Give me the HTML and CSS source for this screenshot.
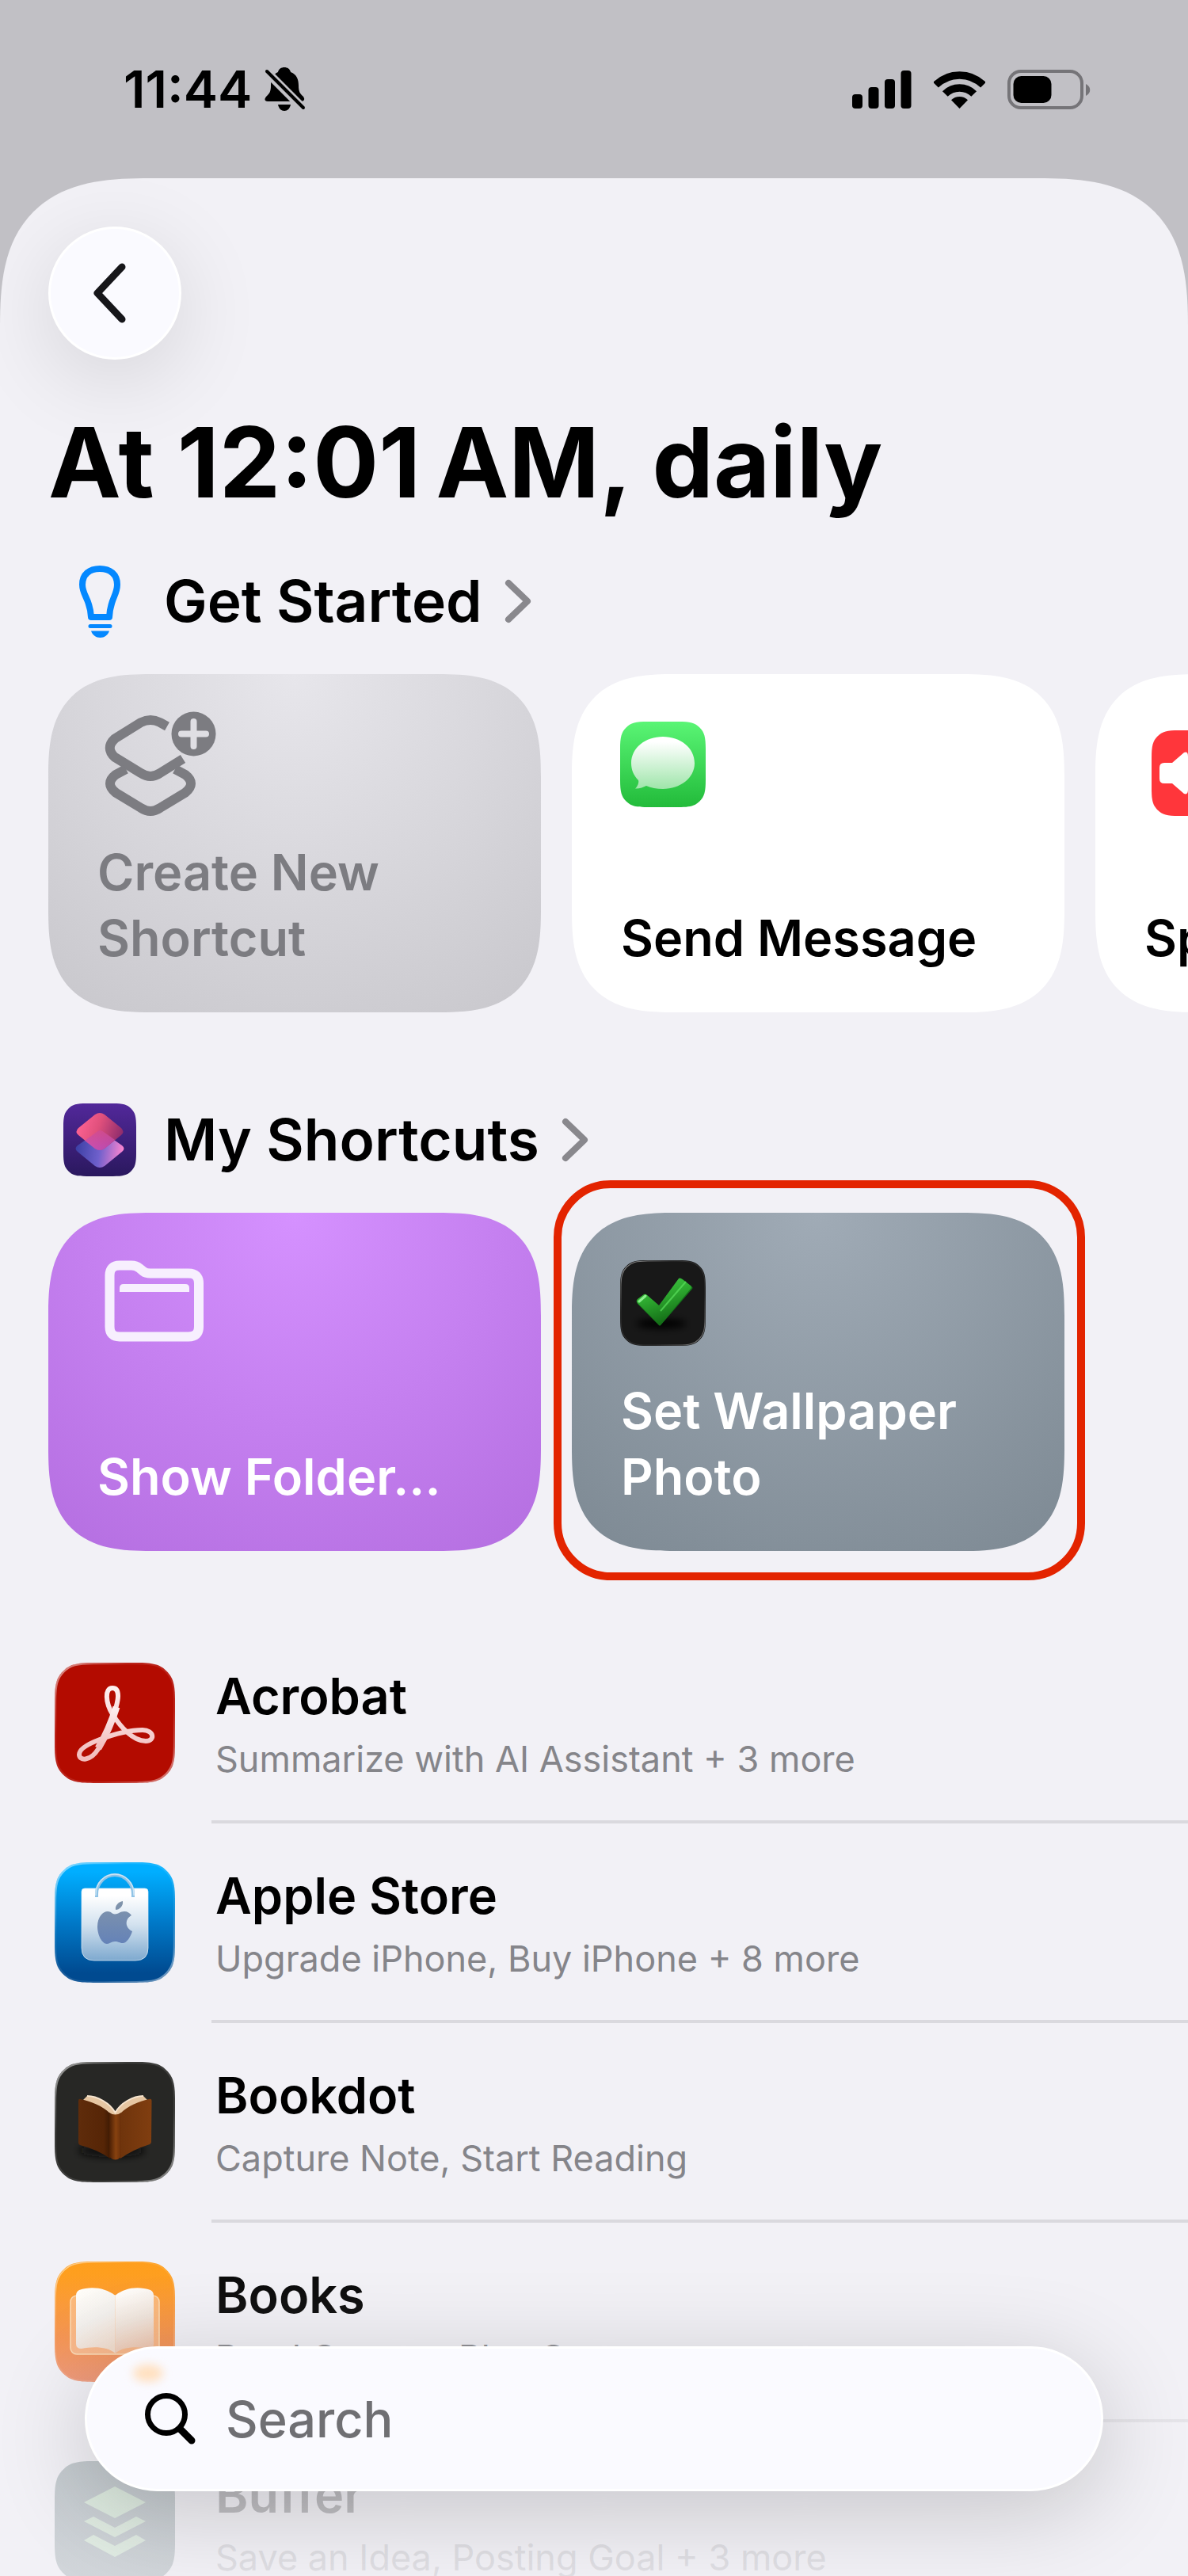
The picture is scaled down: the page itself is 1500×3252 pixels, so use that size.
FILE: index.html
```html
<!DOCTYPE html>
<html lang="en">
<head>
<meta charset="utf-8">
<meta name="viewport" content="width=device-width, initial-scale=1">
<title>At 12:01 AM, daily</title>
<link rel="stylesheet" href="styles.css">
</head>
<body>
<svg class="defs" aria-hidden="true">
  <defs>
    <path id="tile" d="M32 0H68C82 0 87.5 1.500 93 7C98.500 12.500 100 18 100 32V68C100 82 98.500 87.500 93 93C87.500 98.500 82 100 68 100H32C18 100 12.500 98.500 7 93C1.500 87.500 0 82 0 68V32C0 18 1.500 12.500 7 7C12.500 1.500 18 0 32 0Z"/>
    <linearGradient id="rim" x1="0" y1="0" x2="1" y2="1"><stop offset="0" stop-color="#fff" stop-opacity=".6"/><stop offset=".3" stop-color="#fff" stop-opacity=".1"/><stop offset=".7" stop-color="#fff" stop-opacity=".1"/><stop offset="1" stop-color="#fff" stop-opacity=".5"/></linearGradient>
    <linearGradient id="green" x1="0" y1="0" x2="0" y2="1"><stop offset="0" stop-color="#5af575"/><stop offset="1" stop-color="#22bb3a"/></linearGradient>
    <linearGradient id="bubble" x1="0" y1="0" x2="0" y2="1"><stop offset="0.100" stop-color="#fff"/><stop offset="1" stop-color="#9fe5aa"/></linearGradient>
    <linearGradient id="violet" x1="0" y1="0" x2="0" y2="1"><stop offset="0" stop-color="#52289a"/><stop offset="1" stop-color="#2a185e"/></linearGradient>
    <linearGradient id="pink" x1="0" y1=".3" x2="1" y2=".6"><stop offset="0" stop-color="#ff6494"/><stop offset=".45" stop-color="#e0507c"/><stop offset="1" stop-color="#8a2a6c"/></linearGradient>
    <linearGradient id="indigo" x1="0" y1=".4" x2="1" y2=".5"><stop offset="0" stop-color="#3b3fa4"/><stop offset=".5" stop-color="#6f60cc"/><stop offset="1" stop-color="#ff86d0"/></linearGradient>
    <linearGradient id="overlap" x1="0" y1="0" x2="0" y2="1"><stop offset="0" stop-color="#d04c92"/><stop offset="1" stop-color="#c04fc0"/></linearGradient>
    <linearGradient id="check" x1="0" y1="0" x2=".4" y2="1"><stop offset="0" stop-color="#47d14b"/><stop offset=".5" stop-color="#2da82f"/><stop offset="1" stop-color="#136c16"/></linearGradient>
    <linearGradient id="ribbon" x1="0" y1="0" x2="0" y2="1"><stop offset="0" stop-color="#fdf0f0"/><stop offset="1" stop-color="#f2bcbc"/></linearGradient>
    <linearGradient id="sky" x1="0" y1="0" x2="0" y2="1"><stop offset=".08" stop-color="#00aeff"/><stop offset=".5" stop-color="#0079c8"/><stop offset=".92" stop-color="#004a90"/></linearGradient>
    <linearGradient id="bag" x1="0" y1="0" x2="0" y2="1"><stop offset=".1" stop-color="#fff"/><stop offset=".5" stop-color="#d3e2ef"/><stop offset="1" stop-color="#7ea9cf"/></linearGradient>
    <linearGradient id="fruit" x1="0" y1="0" x2="0" y2="1"><stop offset="0" stop-color="#8295aa"/><stop offset="1" stop-color="#6482b8"/></linearGradient>
    <linearGradient id="coverL" x1="0" y1="0" x2="1" y2="0"><stop offset="0" stop-color="#5f2c0b"/><stop offset=".8" stop-color="#562506"/><stop offset="1" stop-color="#3e1a03"/></linearGradient>
    <linearGradient id="coverR" x1="0" y1="0" x2="1" y2="0"><stop offset="0" stop-color="#6f340c"/><stop offset="1" stop-color="#803e10"/></linearGradient>
    <linearGradient id="spine" x1="0" y1="0" x2="1" y2="0"><stop offset="0" stop-color="#4a1f04"/><stop offset=".55" stop-color="#874210"/><stop offset="1" stop-color="#6a300a"/></linearGradient>
    <linearGradient id="orange" x1="0" y1="0" x2="0" y2="1"><stop offset=".1" stop-color="#ff9b14"/><stop offset=".6" stop-color="#f58c40"/><stop offset="1" stop-color="#ee8660"/></linearGradient>
    <linearGradient id="pageL" x1=".3" y1="0" x2=".6" y2="1"><stop offset="0" stop-color="#fffdf8"/><stop offset=".5" stop-color="#f1eeea"/><stop offset="1" stop-color="#f0d9c8"/></linearGradient>
    <linearGradient id="pageR" x1="0.400" y1="0" x2=".6" y2="1"><stop offset="0" stop-color="#fffdfa"/><stop offset=".5" stop-color="#eee2d8"/><stop offset="1" stop-color="#eebfa4"/></linearGradient>
    <filter id="soft" x="-50%" y="-100%" width="200%" height="300%"><feGaussianBlur stdDeviation="5"/></filter>
  </defs>
</svg>

<div class="screen">
  <header class="status">
    <div class="status-side">
      <time class="clock">11:44</time>
      <svg width="52" height="56" viewBox="0 0 52 56" role="img" aria-label="Silent">
        <path d="M25 0C29 0 32 2 33 6C41 9 43 16 43 23C43 31 45 33 48 36C52 40 50 43 46 43H4C0 43-1 40 3 36C6 33 8 31 8 23C8 16 10 9 17 6C18 2 21 0 25 0Z"/>
        <path d="M17 47H33C32 52 29 55 25 55C21 55 18 52 17 47Z"/>
        <path class="slash-gap" d="M1 4L49 52"/><path class="slash" d="M3 5L49 51"/>
      </svg>
    </div>
    <div class="status-side status-right">
      <svg width="75" height="48" viewBox="0 0 75 48" role="img" aria-label="Signal">
        <rect y="30" width="13" height="18" rx="4"/><rect x="20.500" y="21" width="13" height="27" rx="4"/><rect x="41" y="11" width="13" height="37" rx="4"/><rect x="61.500" y="0" width="13" height="48" rx="4"/>
      </svg>
      <svg width="65" height="48" viewBox="0 0 65 48" role="img" aria-label="Wi-Fi">
        <g fill="none" stroke="#000" stroke-width="9.500"><path d="M2.500 18.200A42.700 42.700 0 0 1 62.500 18.200"/><path d="M14.300 29.500A25.800 25.800 0 0 1 50.700 29.500"/></g>
        <path d="M22 37.200A15 15 0 0 1 43 37.200L32.500 48Z"/>
      </svg>
      <svg width="106" height="50" viewBox="0 0 106 50" role="img" aria-label="Battery">
        <rect x="2" y="2" width="92" height="46" rx="15" fill="none" stroke="#757478" stroke-width="4"/>
        <rect x="7.500" y="8" width="48" height="34" rx="10"/>
        <path d="M99 18C106 21 106 30 99 33Z" fill="#757478"/>
      </svg>
    </div>
  </header>

  <main class="sheet">
    <button class="back" type="button" aria-label="Back">
      <svg width="48" height="76" viewBox="0 0 48 76"><path d="M39 5L8 38L39 71"/></svg>
    </button>
    <h1 class="title">At 12:01&#8239;AM, daily</h1>

    <section>
      <h2 class="heading"><a href="#get-started">
        <svg width="92" height="92" viewBox="0 0 92 92" fill="none" stroke="#0488ff" stroke-linecap="round" stroke-linejoin="round">
          <path stroke-width="8" d="M35 66C34 43 24 39 24 25C24 12 33 5 46 5C59 5 68 12 68 25C68 39 59 43 58 66Z"/><path stroke-width="5" d="M34 77.500H59"/><path fill="#0488ff" stroke="none" d="M35 83.500H58C56 89 52 92 46.500 92C41 92 37 89 35 83.500Z"/>
        </svg>
        <span>Get Started</span>
        <svg class="chevron" width="34" height="56" viewBox="0 0 34 56"><path d="M5 5L29 28L5 51"/></svg>
      </a></h2>
      <div class="cards" id="get-started">
        <button class="card card-new" type="button">
          <svg width="160" height="140" viewBox="0 0 160 140">
            <g fill="none" stroke="#7c7c81" stroke-width="12"><path d="M90 26L81 21Q69 15 57 21L24 41.500Q11.500 53 24 65L57 85Q69 93 81 85L110 67"/><path d="M38 80L25 87Q11 98 25 109.500L57 129Q69 137 81 129L113 109.500Q127 98 113 87L100 80"/></g>
            <circle cx="123.500" cy="35.500" r="28" fill="#7c7c81"/><path d="M123.500 20V51M108 35.500H139" fill="none" stroke="#dfdee3" stroke-width="8" stroke-linecap="round"/>
          </svg>
          <span>Create New<br>Shortcut</span>
        </button>
        <button class="card" type="button">
          <svg width="160" height="140" viewBox="0 0 160 140">
            <g transform="translate(1 20)"><use href="#tile" transform="scale(1.080)" fill="url(#green)"/>
            <path fill="url(#bubble)" d="M54 19C76 19 94 33 94 52.500C94 71 76 85 54 85C46 85 39 83.500 33 81C29 83 24 85 19 84.500C22 82 24 77 23 74C17 68 14 61 14 52.500C14 33 32 19 54 19Z"/></g>
          </svg>
          <span>Send Message</span>
        </button>
        <button class="card" type="button">
          <svg width="160" height="140" viewBox="0 0 160 140">
            <g transform="translate(11 31)"><use href="#tile" transform="scale(1.080)" fill="#ff363b"/>
            <path fill="#fff" d="M10 47Q10 41 16 41H26L41 28Q46 26 46 33V75Q46 82 41 80L26 67H16Q10 67 10 61Z"/><path fill="none" stroke="#fff" stroke-width="7" stroke-linecap="round" d="M58 42Q65 54 58 66M70 34Q82 54 70 74"/></g>
          </svg>
          <span>Speak Text</span>
        </button>
      </div>
    </section>

    <section class="mine">
      <h2 class="heading"><a href="#my-shortcuts">
        <svg width="92" height="92" viewBox="0 0 92 92">
          <use href="#tile" transform="scale(.92)" fill="url(#violet)"/>
          <path fill="url(#indigo)" d="M41 37Q46 33 51 37L74 53Q79 57 74 61L52 79Q46 83 40 79L18 61Q13 57 18 53Z"/>
          <path fill="url(#pink)" d="M40 14Q46 10 52 14L73 31Q78 36 73 40L52 57Q46 61 40 57L19 40Q14 36 19 31Z"/>
          <path fill="url(#overlap)" opacity=".8" d="M42 36Q46 32 51 36L65 46L52 57Q46 61 40 57L27 47Z"/>
        </svg>
        <span>My Shortcuts</span>
        <svg class="chevron" width="34" height="56" viewBox="0 0 34 56"><path d="M5 5L29 28L5 51"/></svg>
      </a></h2>
      <div class="cards" id="my-shortcuts">
        <button class="card card-folder" type="button">
          <svg width="160" height="140" viewBox="0 0 160 140" fill="#f7effe">
            <path fill="none" stroke="#f7effe" stroke-width="12" d="M30 26.500H45Q51 26.500 55 30L60 34Q63 36.500 69 36.500H117Q130 36.500 130 49V104Q130 116.500 117 116.500H30Q17.500 116.500 17.500 104V39Q17.500 26.500 30 26.500Z"/>
            <path d="M30 60V55Q30 50 35 50H113Q118 50 118 55V60Z"/>
          </svg>
          <span>Show Folder...</span>
        </button>
        <div class="marked">
          <button class="card card-wallpaper" type="button">
            <svg width="160" height="140" viewBox="0 0 160 140">
              <g transform="translate(1 20)"><use href="#tile" transform="scale(1.080)" fill="#181818"/><use href="#tile" transform="translate(1 1) scale(1.060)" fill="none" stroke="url(#rim)" stroke-width="1"/></g>
              <ellipse cx="53" cy="100" rx="32" ry="6" fill="#000" filter="url(#soft)"/>
              <path fill="#14701a" stroke="#14701a" stroke-width="3" stroke-linejoin="round" d="M24 74L51 101L91 55L79 45L51 80L34 65Z"/>
              <path fill="url(#check)" d="M22 73Q21 71 23 69L31 63Q33 62 35 64L50 77L75 43Q76 42 78 43L90 52Q92 54 90 56L53 100Q51 102 49 100Z"/>
              <path d="M52 84L84 47" stroke="#5be05d" stroke-width="2" opacity=".7"/><path d="M25 72L33 65" stroke="#8df08f" stroke-width="3" stroke-linecap="round"/>
            </svg>
            <span>Set Wallpaper<br>Photo</span>
          </button>
        </div>
      </div>
    </section>

    <ul class="apps">
      <li class="app">
        <svg class="app-icon" viewBox="0 0 152 152">
          <use href="#tile" transform="scale(1.520)" fill="#b30b00"/><use href="#tile" transform="translate(1 1) scale(1.500)" fill="none" stroke="url(#rim)" stroke-width="1.500"/>
          <path fill="none" stroke="url(#ribbon)" stroke-width="6" d="M73 32C63 32 64 50 73 65C83 81 99 99 115 99C127 99 126 85 111 85C95 85 73 91 57 97C41 103 31 109 31 116C31 124 45 125 55 109C65 92 80 56 80 42C80 36 78 32 73 32Z"/>
          <path fill="none" stroke="url(#ribbon)" stroke-width="9" d="M78 56C73 72 64 93 55 108"/>
        </svg>
        <a class="app-text" href="#acrobat"><span class="app-name">Acrobat</span><span class="app-info">Summarize with AI Assistant + 3 more</span></a>
      </li>
      <li class="app">
        <svg class="app-icon" viewBox="0 0 152 152">
          <use href="#tile" transform="scale(1.520)" fill="url(#sky)"/><use href="#tile" transform="translate(1 1) scale(1.500)" fill="none" stroke="url(#rim)" stroke-width="1.500"/>
          <path fill="url(#bag)" stroke="#e4f0fa" stroke-opacity=".7" d="M38 33H114Q118 33 118 37V108Q118 124 102 124H50Q34 124 34 108V37Q34 33 38 33Z"/>
          <path fill="none" stroke="#8fc3e6" stroke-width="4" d="M53 44V40A23 24 0 0 1 99 40V44"/><path fill="none" stroke="#cde5f5" stroke-width="1.500" d="M52 42V40A24 25 0 0 1 100 40V42"/>
          <path fill="url(#fruit)" d="M76 65.500C80 65.500 83 62 88 62C92 62 95 64 97 67C88 72 89 83 98 87C96 94 91 102 86 102C82 102 81 100 76 100C71 100 70 103 66 103C60 103 54 92 54 81C54 69 61 62 67 62C71 62 73 65.500 76 65.500ZM77 60C76 54 81 50 86 49C87 55 82 60 77 60Z"/>
        </svg>
        <a class="app-text" href="#apple-store"><span class="app-name">Apple Store</span><span class="app-info">Upgrade iPhone, Buy iPhone + 8 more</span></a>
      </li>
      <li class="app">
        <svg class="app-icon" viewBox="0 0 152 152">
          <use href="#tile" transform="scale(1.520)" fill="#272725"/><use href="#tile" transform="translate(1 1) scale(1.500)" fill="none" stroke="url(#rim)" stroke-width="1.500"/>
          <ellipse cx="72" cy="112" rx="42" ry="8" fill="#0e0e0d" filter="url(#soft)"/>
          <path fill="#e6c6a2" d="M35 49L41 43C54 43 70 52 76.500 64C83 52 99 43 112 43L118 49L80 72H74Z"/>
          <path fill="none" stroke="#f7e5cf" stroke-width="2" d="M41 43C54 43 70 52 76.500 64C83 52 99 43 112 43"/>
          <path fill="url(#coverL)" d="M30 49Q30 46 33 47C46 50 60 55 70 65V122Q55 111 32 105Q30 104 30 102Z"/>
          <path fill="url(#coverR)" d="M122.500 49Q122.500 46 119 47C106 50 93 55 83 65V122Q98 111 120 104Q122 103 122 101Z"/>
          <path fill="url(#spine)" d="M69 64Q76.500 69 84 64V120Q76.500 127 69 120Z"/>
        </svg>
        <a class="app-text" href="#bookdot"><span class="app-name">Bookdot</span><span class="app-info">Capture Note, Start Reading</span></a>
      </li>
      <li class="app">
        <svg class="app-icon" viewBox="0 0 152 152">
          <use href="#tile" transform="scale(1.520)" fill="url(#orange)"/><use href="#tile" transform="translate(1 1) scale(1.500)" fill="none" stroke="url(#rim)" stroke-width="1"/>
          <rect x="20" y="43" width="112" height="74" rx="8" fill="#fbc9a0" fill-opacity=".6" stroke="#fbd9b0" stroke-width="1.500"/>
          <path fill="url(#pageL)" d="M27 43Q27 38 31 36C46 31 64 33 76.500 43V116C67 107 48 107 34 110Q27 110 27 104Z"/>
          <path fill="url(#pageR)" d="M125 43Q125 38 121 36C106 31 88 33 76.500 43V116C86 107 105 107 119 110Q125 110 125 104Z"/>
        </svg>
        <a class="app-text" href="#books"><span class="app-name">Books</span><span class="app-info">Read Current, Play Current</span></a>
      </li>
      <li class="app">
        <svg class="app-icon" viewBox="0 0 152 152">
          <use href="#tile" transform="scale(1.520)" fill="#2b4a4c"/>
          <g fill="#8fd08c"><path d="M76 32L115 52L76 72L37 52Z"/><path d="M37 76L49 70L76 84L103 70L115 76L76 96Z"/><path d="M37 100L49 93L76 107L103 93L115 100L76 121Z"/></g>
        </svg>
        <a class="app-text" href="#buffer"><span class="app-name">Buffer</span><span class="app-info">Save an Idea, Posting Goal + 3 more</span></a>
      </li>
    </ul>
  </main>

  <div class="fade"></div>
  <label class="search">
    <svg width="64" height="66" viewBox="0 0 64 66" fill="none" stroke="#000" stroke-linecap="round"><circle cx="27" cy="27" r="23.500" stroke-width="7"/><path stroke-width="9" d="M45 46L59 60"/></svg>
    <input type="search" placeholder="Search" aria-label="Search">
  </label>
</div>
</body>
</html>
```
FILE: styles.css
```css
* {
  box-sizing: border-box;
}

body {
  margin: 0;
  font-family: Inter, "Liberation Sans", sans-serif;
  color: #000;
  background: #c1c0c5;
}

a {
  color: inherit;
  text-decoration: none;
}

button {
  font: inherit;
  border: 0;
  cursor: pointer;
}

.defs {
  position: absolute;
  width: 0;
  height: 0;
}

.screen {
  position: relative;
  height: 100vh;
  overflow: hidden;
  display: flex;
  flex-direction: column;
}

/* Status bar */
.status {
  flex: none;
  height: 225px;
  padding: 0 122px 0 156px;
  display: flex;
  align-items: center;
  justify-content: space-between;
}

.status-side {
  display: flex;
  align-items: center;
  gap: 16px;
}

.status-right {
  gap: 28px;
}

.clock {
  font-size: 65px;
  font-weight: 600;
  line-height: 76px;
}

.slash,
.slash-gap {
  fill: none;
  stroke: #000;
  stroke-width: 4;
  stroke-linecap: round;
}

.slash-gap {
  stroke: #c1c0c5;
  stroke-width: 11;
}

/* Sheet */
.sheet {
  flex: 1;
  min-height: 0;
  overflow: hidden;
  padding: 61px 0 0 61px;
  background: #f2f1f6;
  border-radius: 145px 145px 0 0;
}

.back {
  width: 168px;
  height: 168px;
  padding: 0 12px 0 0;
  display: flex;
  align-items: center;
  justify-content: center;
  border: 3px solid #fff;
  border-radius: 50%;
  background: #fafaff;
  box-shadow: 0 24px 110px rgba(0, 0, 0, 0.12);
}

.back path {
  fill: none;
  stroke: #16161a;
  stroke-width: 9;
  stroke-linecap: round;
  stroke-linejoin: round;
}

.title {
  margin: 54px 0 53px;
  font-size: 123px;
  font-weight: 700;
  line-height: 152px;
  white-space: nowrap;
}

.mine {
  margin-top: 115px;
}

.heading {
  margin: 0 0 46px;
  padding-left: 19px;
  font-size: 73px;
  font-weight: 600;
  line-height: 92px;
}

.heading a {
  display: flex;
  align-items: center;
}

.heading span {
  margin: 0 28px 0 35px;
}

.chevron path {
  fill: none;
  stroke: #89888d;
  stroke-width: 8;
  stroke-linecap: round;
  stroke-linejoin: round;
}

/* Shortcut cards */
.cards {
  display: flex;
  gap: 39px;
}

.card {
  flex: none;
  width: 622px;
  height: 427px;
  padding: 40px 60px 52px;
  display: flex;
  flex-direction: column;
  align-items: flex-start;
  justify-content: space-between;
  text-align: left;
  font-size: 63px;
  font-weight: 600;
  line-height: 83px;
  white-space: nowrap;
  color: #000;
  background: #fff;
  border-radius: 104px;
}

.card svg {
  flex: none;
}

.card span {
  padding-left: 2px;
}

.card-new {
  color: #7c7c81;
  background: radial-gradient(circle at 50% 0, #e7e6eb, #c8c7cc 530px);
}

.card-folder {
  color: #fff;
  background: radial-gradient(circle at 50% 0, #d591ff, #b46ee0 530px);
}

.card-wallpaper {
  color: #fff;
  background: radial-gradient(circle at 50% 0, #a0abb6, #7d8993 530px);
}

@supports (corner-shape: squircle) {
  .card {
    border-radius: 130px;
    corner-shape: superellipse(1.46);
  }

  .sheet {
    border-radius: 190px 190px 0 0;
    corner-shape: superellipse(1.46);
  }
}

.marked {
  position: relative;
}

/* Callout ring round the highlighted card */
.marked::after {
  content: "";
  position: absolute;
  inset: -41px -26px -37px -23px;
  border: 10px solid #e32400;
  border-radius: 72px;
  pointer-events: none;
}

/* App list */
.apps {
  list-style: none;
  margin: 92px 0 0;
  padding: 0 0 0 8px;
}

.app {
  display: flex;
  gap: 46px;
}

.app-icon {
  flex: none;
  width: 152px;
  height: 152px;
  margin-top: 49px;
}

.app-text {
  flex: 1;
  height: 252px;
  padding: 53px 0 0 5px;
  display: flex;
  flex-direction: column;
  gap: 14px;
  border-bottom: 4px solid #dad9de;
}

.app-name {
  font-size: 63px;
  font-weight: 600;
  line-height: 76px;
}

.app-info {
  font-size: 45px;
  line-height: 56px;
  color: #85858a;
}

/* Bottom search */
.fade {
  position: absolute;
  inset: auto 0 0;
  height: 450px;
  background: linear-gradient(rgba(242, 241, 246, 0), rgba(242, 241, 246, 0.1) 150px, rgba(242, 241, 246, 0.2) 210px, rgba(242, 241, 246, 0.76) 300px, rgba(242, 241, 246, 0.84));
  pointer-events: none;
}

.search {
  position: absolute;
  inset: auto 107px 107px;
  height: 183px;
  padding: 0 76px 0 73px;
  display: flex;
  align-items: center;
  gap: 38px;
  border: 3px solid #fff;
  border-radius: 92px;
  background: #fafaff;
  box-shadow: 0 24px 120px rgba(0, 0, 0, 0.19);
}

/* Colour of the icon behind, showing through the glass */
.search::before {
  content: "";
  position: absolute;
  top: 20px;
  left: 58px;
  width: 38px;
  height: 22px;
  border-radius: 50%;
  background: #ffe0c0;
  filter: blur(6px);
}

.search input {
  flex: 1;
  min-width: 0;
  padding: 0;
  border: 0;
  outline: 0;
  background: none;
  font: 500 63px/76px Inter, "Liberation Sans", sans-serif;
  color: #000;
}

.search input::placeholder {
  color: #6f6f73;
  opacity: 1;
}
```
